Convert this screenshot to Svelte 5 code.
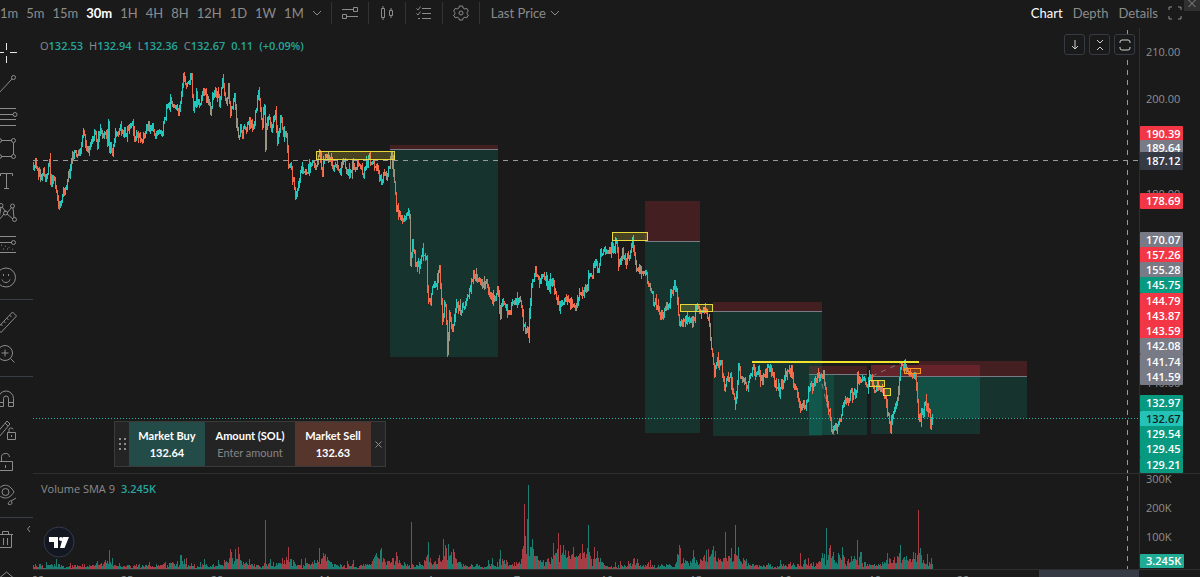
<script>
  const intervals = ['1m', '5m', '15m', '30m', '1H', '4H', '8H', '12H', '1D', '1W', '1M'];
  const views = ['Chart', 'Depth', 'Details'];

  let interval = $state('30m');
  let view = $state('Chart');
  let priceType = $state('Last Price');
  let amount = $state('');
  let panelOpen = $state(true);

  const tools = [
    ['cursor', 'line', 'levels', 'shape', 'text', 'pattern', 'forecast', 'emoji'],
    ['ruler', 'zoom'],
    ['magnet', 'draw', 'lock', 'eye'],
    ['trash'],
  ];

  // swing points of the series, canvas x / y
  const swings = [
    33,163, 34,173, 36,161, 39,172, 41,177, 44,170, 47,178, 50,163, 52,183, 54,173, 57,192, 58,201, 61,205,
    63,195, 67,183, 70,173, 73,158, 77,152, 80,153, 82,141, 85,133, 89,153, 93,142, 95,130, 98,142, 99,130,
    103,135, 105,132, 108,143, 109,119, 110,147, 113,152, 117,132, 121,129, 124,133, 127,130, 133,123,
    136,140, 138,132, 143,140, 146,128, 152,126, 157,136, 160,131, 164,127, 167,110, 171,102, 175,104,
    179,113, 182,93, 184,77, 187,83, 192,77, 194,107, 197,98, 201,105, 204,85, 207,97, 211,109, 215,93,
    218,92, 220,103, 223,83, 227,105, 229,87, 231,110, 235,97, 237,123, 239,138, 241,125, 243,132, 245,125,
    247,130, 250,120, 254,128, 256,113, 259,93, 263,123, 265,108, 266,148, 267,123, 269,115, 272,133,
    276,110, 278,143, 281,120, 285,135, 287,138, 289,167, 292,170, 297,197, 299,183, 303,165, 306,173,
    310,168, 317,162, 320,150, 323,172, 326,155, 330,158, 333,167, 337,162, 340,168, 344,163, 349,173,
    353,165, 358,164, 364,172, 370,158, 377,167, 382,180, 385,172, 387,177, 392,157, 394,170, 397,208,
    400,212, 405,220, 410,212, 411,263, 413,240, 417,267, 420,264, 423,253, 427,255, 428,290, 431,303,
    433,287, 437,282, 440,270, 443,320, 446,303, 448,352, 450,310, 453,327, 457,302, 461,313, 467,298,
    470,293, 474,273, 478,280, 483,283, 486,278, 489,293, 496,298, 498,287, 501,313, 503,300, 509,315,
    514,302, 521,300, 524,322, 529,332, 532,287, 536,272, 541,282, 544,270, 549,287, 553,280, 560,305,
    568,298, 575,308, 582,292, 583,297, 588,285, 590,272, 592,278, 595,260, 599,268, 601,252, 605,252,
    609,255, 613,248, 617,245, 619,262, 623,253, 627,262, 631,253, 633,238, 637,267, 642,272, 646,273,
    650,287, 655,302, 661,317, 667,308, 672,295, 674,287, 677,288, 680,323, 684,323, 687,318, 693,323,
    696,310, 698,305, 701,313, 706,307, 709,322, 712,345, 715,375, 718,358, 722,366, 725,385, 730,373,
    736,400, 739,367, 743,378, 748,390, 752,372, 758,370, 763,378, 771,367, 776,383, 780,392, 785,377,
    792,370, 794,385, 797,387, 801,407, 807,403, 810,388, 813,385, 818,377, 824,373, 828,400, 833,433,
    838,425, 842,412, 847,400, 851,393, 856,395, 858,377, 863,377, 868,382, 872,377, 875,395, 879,383,
    883,388, 887,403, 891,427, 895,407, 898,398, 901,370, 903,363, 910,370, 914,375, 917,385, 919,422,
    922,415, 926,405, 930,410, 931,423, 933,418,
  ];

  // x, height above the baseline, up
  const spikes = [
    [109, 19, 1], [181, 14, 1], [230, 20, 0], [238, 22, 0], [265, 49, 0], [288, 22, 0], [319, 21, 1],
    [325, 15, 0], [376, 16, 1], [381, 21, 0], [396, 17, 0], [411, 47, 0], [428, 27, 1], [443, 30, 0],
    [448, 25, 1], [453, 20, 1], [500, 19, 1], [524, 65, 0], [527, 50, 0], [528, 84, 1], [532, 30, 1],
    [553, 26, 0], [558, 36, 0], [563, 24, 0], [573, 22, 1], [582, 25, 0], [588, 44, 1], [594, 22, 0],
    [634, 11, 0], [679, 24, 0], [693, 19, 1], [708, 20, 0], [713, 23, 0], [725, 37, 0], [735, 44, 1],
    [738, 22, 1], [800, 16, 0], [826, 41, 1], [830, 24, 0], [842, 22, 1], [857, 29, 1], [887, 16, 0],
    [900, 24, 1], [915, 16, 0], [918, 59, 0],
  ];

  let seed = 11;
  function random() {
    seed = (seed * 16807) % 2147483647;
    return seed / 2147483647;
  }

  function levelAt(x) {
    for (let i = 2; i < swings.length; i += 2) {
      if (x <= swings[i]) {
        const t = (x - swings[i - 2]) / (swings[i] - swings[i - 2]);
        return swings[i - 1] + t * (swings[i + 1] - swings[i - 1]);
      }
    }
    return swings[swings.length - 1];
  }

  function buildCandles() {
    const paths = { up: '', down: '', mixed: '' };
    let prev = levelAt(33);
    for (let x = 33; x <= 932; x++) {
      const close = levelAt(x + 1) + (random() - 0.5) * 9;
      const wick = random() < 0.2 ? 7 : 3;
      const top = Math.round(Math.min(prev, close) - random() * wick);
      const bottom = Math.round(Math.max(prev, close) + random() * wick + 1);
      const side = random() < 0.16 ? 'mixed' : close < prev ? 'up' : 'down';
      paths[side] += `M${x + 0.5} ${top}V${bottom}`;
      prev = close;
    }
    return paths;
  }

  function buildVolume() {
    const bars = { up: '', down: '' };
    for (let x = 33; x <= 932; x++) {
      let h = 1 + random() * 4 + (random() < 0.15 ? random() * 7 : 0);
      let up = random() < 0.5;
      for (const [sx, sh, rising] of spikes) {
        const d = Math.abs(x - sx);
        if (d === 0) {
          h = sh;
          up = rising === 1;
          break;
        }
        if (d < 14 && sh !== 49 && sh !== 47) h += Math.min(sh, 24) * 0.6 * random() * Math.exp(-d / 6);
      }
      bars[up ? 'up' : 'down'] += `M${x + 0.5} 95V${95 - Math.round(h)}`;
    }
    return bars;
  }

  const candles = buildCandles();
  const volume = buildVolume();

  // short positions: left, right, stop, entry, target
  const positions = [
    [390, 498, 145, 149, 357],
    [645, 700, 201, 241, 433],
    [713, 822, 302, 311, 436],
    [809, 867, 366, 374, 435],
    [871, 980, 365, 376, 434],
    [918, 1027, 361, 376, 418],
  ];

  const boxes = [
    [316, 151, 78, 8],
    [612, 232, 35, 8],
    [680, 304, 32, 7],
    [869, 380, 15, 6],
    [883, 388, 7, 7],
    [904, 368, 16, 5],
  ];

  const prices = [['210.00', 52], ['200.00', 99], ['180.00', 194], ['140.00', 383]];
  const tags = [
    ['190.39', 134, 'stop'],
    ['189.64', 148, 'entry'],
    ['178.69', 201, 'stop'],
    ['170.07', 240, 'entry'],
    ['157.26', 255, 'stop'],
    ['155.28', 270, 'entry'],
    ['145.75', 285, 'target'],
    ['144.79', 301, 'stop'],
    ['143.87', 316, 'stop'],
    ['143.59', 331, 'stop'],
    ['142.08', 346, 'entry'],
    ['141.74', 362, 'entry'],
    ['141.59', 377, 'entry'],
    ['132.97', 403, 'target'],
    ['132.67', 419, 'last'],
    ['129.54', 434, 'target'],
    ['129.45', 449, 'target'],
    ['129.21', 465, 'target'],
  ];
  const dates = [
    ['22', 38], ['25', 127], ['28', 217], ['Mar', 330], ['4', 430], ['7', 517],
    ['10', 607], ['13', 696], ['16', 785], ['19', 875], ['22', 963],
  ];
</script>

{#snippet chevron()}
  <svg class="chevron" width="10" height="8" viewBox="0 0 10 8"><path d="M1 2l4 4 4-4" /></svg>
{/snippet}

<div class="terminal">
  <header class="topbar">
    <nav class="intervals">
      {#each intervals as item}
        <button class="link" class:active={interval === item} onclick={() => (interval = item)}>{item}</button>
      {/each}
      <button class="link more" aria-label="More intervals">{@render chevron()}</button>
    </nav>
    <div class="actions">
      <button aria-label="Settings sliders">
        <svg width="16" height="14" viewBox="0 0 16 14"><path d="M0 3.500h11M5 10.500h11M11.500 1.500h4v4h-4zM.5 8.500h4v4h-4z" /></svg>
      </button>
      <button aria-label="Candle style">
        <svg width="14" height="16" viewBox="0 0 14 16"><path d="M1.500 3.500h3v9h-3zM3 1v2.500M3 12.500V15M9.500 5.500h3v5h-3zM11 3v2.500M11 10.500V13" /></svg>
      </button>
      <button aria-label="Indicators">
        <svg width="16" height="14" viewBox="0 0 16 14"><path d="M6 2.500h9M6 7.500h9M6 12.500h9M.5 2.500L2 4l2.500-3.500M.5 7.500L2 9l2.500-3.500M2 12.500h2" /></svg>
      </button>
      <button aria-label="Settings">
        <svg width="16" height="16" viewBox="0 0 16 16"><path d="M6.400 1h3.200l.5 2 1.700 1 2-.6 1.600 2.800-1.500 1.400v1l1.500 1.400-1.600 2.800-2-.6-1.700 1-.5 1.800H6.400l-.5-1.800-1.700-1-2 .6L.6 10l1.500-1.400v-1L.6 6.200l1.600-2.800 2 .6 1.700-1z" /><circle cx="8" cy="8" r="2" /></svg>
      </button>
    </div>
    <label class="price-type">
      <select bind:value={priceType} aria-label="Price type">
        <option>Last Price</option>
        <option>Mark Price</option>
        <option>Index Price</option>
      </select>
      {@render chevron()}
    </label>
    <nav class="views">
      {#each views as item}
        <button class="link" class:active={view === item} onclick={() => (view = item)}>{item}</button>
      {/each}
      <button class="link" aria-label="Full screen">
        <svg width="14" height="14" viewBox="0 0 14 14"><path d="M1 4V1h3M10 1h3v3M13 10v3h-3M4 13H1v-3" /></svg>
      </button>
    </nav>
    <button class="corner" aria-label="Close window">
      <svg width="8" height="8" viewBox="0 0 8 8"><path d="M.5 0L7.500 7M7.500 0L.5 7" /></svg>
    </button>
  </header>

  <div class="workspace">
    <aside class="tools">
      {#each tools as group}
        <div class="group">
          {#each group as tool}
            <button aria-label={tool}>
              <svg width="28" height="28" viewBox="0 0 28 28">
                {#if tool === 'cursor'}
                  <path class="bright" d="M12.500 4v7M12.500 17v7M3 13.500h7M16 13.500h7" />
                {:else if tool === 'line'}
                  <path d="M4 23L18 8" /><circle cx="19.500" cy="6.500" r="2" />
                {:else if tool === 'levels'}
                  <path d="M4 5.500h18M4 11.500h15M4 16.500h18M4 22.500h18" /><circle cx="21" cy="11.500" r="2" />
                {:else if tool === 'shape'}
                  <path d="M7 5.500h11M7 21.500h11M5.500 7v13M19.500 8v11" />
                  <circle cx="19.500" cy="5.500" r="2" /><circle cx="19.500" cy="21.500" r="2" />
                  <circle cx="5.500" cy="5.500" r="2" /><circle cx="5.500" cy="21.500" r="2" />
                {:else if tool === 'text'}
                  <path d="M6.500 9V6.500h12V9M12.500 6.500v15M10 21.500h5" />
                {:else if tool === 'pattern'}
                  <path d="M7 8l-2 12M8 8l4 5M13 14l5-6M19 9l1 10M13 15l6 5M10 15l-5 6" />
                  <circle cx="7" cy="6.500" r="2" /><circle cx="18.500" cy="7" r="2" />
                  <circle cx="11.500" cy="14" r="2" /><circle cx="20.500" cy="20.500" r="2" />
                {:else if tool === 'forecast'}
                  <path d="M4 5.500h18M4 11.500h14M4 21.500h18" /><circle cx="19.500" cy="11.500" r="2" />
                  <path stroke-dasharray="1 3" d="M7 14l7 2 6 3M5 18h12" />
                {:else if tool === 'emoji'}
                  <circle cx="12" cy="14.500" r="9.500" /><path d="M8 16.500c1 4 7 4 8 0M9.500 11v2M14.500 11v2" />
                {:else if tool === 'ruler'}
                  <path d="M3 20.500L18.500 4l4 4L7 24.500zM15.500 7l2 2M12.500 10l2 2M9.500 13l2 2M6.500 16l2 2" />
                {:else if tool === 'zoom'}
                  <circle cx="11" cy="13" r="7.500" /><path d="M16.500 18.500l4 4M11 9.500v7M7.500 13h7" />
                {:else if tool === 'magnet'}
                  <path d="M4.500 21.500v-8a7.500 7.500 0 0 1 15 0v8h-5v-8a2.500 2.500 0 0 0-5 0v8zM4.500 17.500h5M14.500 17.500h5" />
                {:else if tool === 'draw'}
                  <path d="M2 17L13 4l3 3L5 20zM11 6l3 3M13.500 15.500h8v7h-8zM15 15.500v-2a2 2 0 0 1 4-1M17.500 18v2" />
                {:else if tool === 'lock'}
                  <path d="M3.500 12.500h15v9h-15zM7.500 12.500V9a4 4 0 0 1 8-1M11.500 16v3" />
                {:else if tool === 'eye'}
                  <path d="M2 11c6-9 13-9 18 0-5 8-12 8-18 0zM14 23c2-5 4-3 4-1s-3 2-4 1M17 20l5-3" /><circle cx="11.500" cy="11" r="3.500" />
                {:else if tool === 'trash'}
                  <path d="M3 8.500h16M5.500 8.500v13h12v-13M8.500 8V5.500h6V8M9.500 12v7M13.500 12v7" />
                {/if}
              </svg>
            </button>
          {/each}
        </div>
      {/each}
      <button class="tree" aria-label="Object tree">
        <svg width="28" height="28" viewBox="0 0 28 28"><path d="M3 19l9.500-8 9.500 8" /></svg>
      </button>
    </aside>

    <main class="chart">
      <section class="pane price">
        <div class="plot">
          <svg class="canvas" width="100%" height="445">
            <g transform="translate(-33 -28)">
              {#each positions as [left, right, stop, entry, target]}
                <rect class="risk" x={left} y={stop} width={right - left} height={entry - stop} />
                <rect class="reward" x={left} y={entry} width={right - left} height={target - entry} />
                <path class="entry" d="M{left} {entry + 0.5}H{right}" />
              {/each}
              <rect class="reward" x="809" y="374" width="25" height="61" />
              <rect class="reward extra" x="918" y="377" width="62" height="41" />
              <rect class="risk" x="871" y="365" width="47" height="11" />
              <path class="trace" d="M822 384L834 435M872 376L901 363" />
              <path class="up" d={candles.up} />
              <path class="down" d={candles.down} />
              <path class="mixed" d={candles.mixed} />
              {#each boxes as [x, y, width, height], i}
                <rect class="box" class:orange={i === 5} x={x + 0.5} y={y + 0.5} {width} {height} />
              {/each}
              <path class="level" d="M752 362H919" />
              <path class="cross" d="M33 160.500H1139M1127.500 30V473" />
              <path class="last" d="M33 418.500H1139" />
            </g>
          </svg>

          <p class="legend">
            <span>O<b>132.53</b></span><span>H<b>132.94</b></span><span>L<b>132.36</b></span><span>C<b>132.67</b></span><b>0.11</b><b>(+0.09%)</b>
          </p>

          <div class="pane-buttons">
            <button aria-label="Move pane down"><svg width="14" height="14" viewBox="0 0 14 14"><path d="M7 2v9M4 8l3 3 3-3" /></svg></button>
            <button aria-label="Collapse pane"><svg width="14" height="14" viewBox="0 0 14 14"><path d="M4 2l3 3 3-3M4 12l3-3 3 3" /></svg></button>
            <button aria-label="Maximize pane"><svg width="14" height="14" viewBox="0 0 14 14"><path d="M2 5V4q0-2 2-2h6q2 0 2 2v1M2 9v1q0 2 2 2h6q2 0 2-2V9" /></svg></button>
          </div>

          {#if panelOpen}
            <form class="order" onsubmit={(e) => e.preventDefault()}>
              <span class="grip">
                <svg width="7" height="12" viewBox="0 0 7 12"><path d="M0 1h2M5 1h2M0 6h2M5 6h2M0 11h2M5 11h2" /></svg>
              </span>
              <button class="side buy"><span>Market Buy</span><span>132.64</span></button>
              <div class="amount">
                <label for="amount">Amount (SOL)</label>
                <input id="amount" placeholder="Enter amount" bind:value={amount} />
              </div>
              <button class="side sell"><span>Market Sell</span><span>132.63</span></button>
              <button class="dismiss" type="button" aria-label="Close order panel" onclick={() => (panelOpen = false)}>
                <svg width="7" height="7" viewBox="0 0 7 7"><path d="M.5.5l6 6M6.500.5l-6 6" /></svg>
              </button>
            </form>
          {/if}
        </div>

        <svg class="scale" width="61" height="445">
          <g transform="translate(0 -28)">
            {#each prices as [text, y]}
              <text class="tick" x="6" y={y + 4}>{text}</text>
            {/each}
            {#each tags as [text, y, kind]}
              <rect class="tag {kind}" x="0" y={y - 8} width="43" height="16" rx="1" />
              <text class="tag-text" class:dark={kind === 'last'} x="6" y={y + 4}>{text}</text>
            {/each}
            <rect class="tag cursor" x="0" y="152" width="43" height="18" rx="1" />
            <text class="tag-text" x="6" y="165">187.12</text>
          </g>
        </svg>
      </section>

      <section class="pane volume">
        <div class="plot">
          <svg class="canvas" width="100%" height="95">
            <g transform="translate(-33 0)">
              <path class="vol-up" d={volume.up} />
              <path class="vol-down" d={volume.down} />
              <path class="cross" d="M1127.500 2V95" />
            </g>
          </svg>
          <p class="legend">Volume SMA 9 <b>3.245K</b></p>
          <a class="logo" href="#chart" aria-label="Chart provider">
            <svg width="32" height="32" viewBox="0 0 32 32">
              <circle cx="16" cy="16" r="15" />
              <path d="M6 11h9v11h-4v-6H6zM20 11h6l-4.500 11H17z" />
              <circle class="dot" cx="18" cy="13" r="2" />
            </svg>
          </a>
          <button class="fold" aria-label="Hide toolbar">
            <svg width="5" height="8" viewBox="0 0 5 8"><path d="M4 1L1.500 4 4 7" /></svg>
          </button>
        </div>
        <svg class="scale" width="61" height="95">
          <text class="tick" x="6" y="9">300K</text>
          <text class="tick" x="6" y="38">200K</text>
          <text class="tick" x="6" y="67">100K</text>
          <rect class="tag vol" x="0" y="80" width="44" height="14" rx="1" />
          <text class="tag-text" x="6" y="91">3.245K</text>
        </svg>
      </section>

      <svg class="time" width="100%" height="24">
        <g transform="translate(-33 0)">
          {#each dates as [text, x]}
            <text class="tick" {x} y="14" text-anchor="middle">{text}</text>
          {/each}
          <rect class="tag cursor" x="1039" y="0" width="100" height="20" />
        </g>
      </svg>
    </main>
  </div>
</div>

<style>
  :global(body) {
    background: #1a1a1a;
  }
  .terminal {
    display: flex;
    flex-direction: column;
    height: 100vh;
    overflow: hidden;
    position: relative;
    background: #1a1a1a;
    color: #8c8c8c;
    font-family: Lato, 'Liberation Sans', sans-serif;
    font-size: 13px;
  }
  button {
    display: flex;
    align-items: center;
    justify-content: center;
    padding: 0;
    border: 0;
    background: none;
    color: inherit;
    font: inherit;
    cursor: pointer;
  }
  svg {
    display: block;
    flex: none;
    fill: none;
    stroke: currentColor;
  }
  p {
    margin: 0;
  }
  .topbar {
    display: flex;
    align-items: center;
    height: 28px;
    flex: none;
    padding-right: 18px;
    line-height: 16px;
    padding-bottom: 2px;
    box-sizing: border-box;
  }
  .intervals {
    display: flex;
    gap: 8px;
    padding-right: 9px;
  }
  .link.active {
    color: #fff;
  }
  .intervals .active {
    font-weight: 700;
  }
  .actions {
    display: flex;
  }
  .actions button {
    width: 37px;
    height: 22px;
    box-sizing: border-box;
    border-left: 1px solid #333;
  }
  .price-type {
    display: flex;
    align-items: center;
    height: 22px;
    padding-left: 11px;
    border-left: 1px solid #333;
  }
  select {
    width: 59px;
    padding: 0;
    border: 0;
    background: none;
    color: inherit;
    font: inherit;
    appearance: none;
  }
  .views {
    display: flex;
    align-items: center;
    gap: 10px;
    margin-left: auto;
  }
  .corner {
    position: absolute;
    top: 0;
    right: 0;
    width: 16px;
    height: 11px;
    padding-bottom: 4px;
    background: #303030;
  }
  .workspace {
    display: flex;
    flex: 1;
    min-height: 0;
  }
  .tools {
    display: flex;
    flex-direction: column;
    align-items: center;
    width: 50px;
    flex: none;
    margin-left: -17px;
    padding-top: 9px;
    box-sizing: border-box;
  }
  .group {
    width: 100%;
  }
  .group + .group {
    margin-top: 6px;
    padding-top: 6px;
    border-top: 1px solid #3a3e49;
  }
  .group button {
    width: 100%;
    height: 32px;
  }
  .tree {
    height: 32px;
    padding-top: 6px;
  }
  .bright {
    stroke: #e8e8e8;
  }
  .chart {
    flex: 1;
    min-width: 0;
  }
  .pane {
    display: flex;
  }
  .volume {
    border-top: 1px solid #2e2e2e;
  }
  .plot {
    flex: 1;
    min-width: 0;
    position: relative;
  }
  .scale {
    border-left: 1px solid #2e2e2e;
    box-sizing: border-box;
  }
  .time {
    border-top: 1px solid #2e2e2e;
    overflow: hidden;
  }
  .canvas {
    overflow: hidden;
  }
  .risk {
    fill: #f23645;
    fill-opacity: 0.2;
    stroke: none;
  }
  .reward {
    fill: #089981;
    fill-opacity: 0.2;
    stroke: none;
  }
  .reward.extra {
    fill-opacity: 0.1;
  }
  .entry {
    stroke: #787b86;
  }
  .trace {
    stroke: #787b86;
    stroke-dasharray: 5 5;
  }
  .up {
    stroke: #22c9bd;
  }
  .down {
    stroke: #f0694a;
  }
  .mixed {
    stroke: #9a9583;
  }
  .box {
    fill: #ffeb3b;
    fill-opacity: 0.2;
    stroke: #e6d83a;
  }
  .box.orange {
    fill: #ff9800;
    stroke: #f39a1e;
  }
  .level {
    stroke: #f2e32c;
    stroke-width: 2;
  }
  .cross {
    stroke: #9a9a9a;
    stroke-dasharray: 5 5;
  }
  .last {
    stroke: #22b5a8;
    stroke-dasharray: 1 2;
  }
  .vol-up {
    stroke: #1c7e70;
  }
  .vol-down {
    stroke: #a73d44;
  }
  .tick,
  .tag-text {
    fill: #8f8f8f;
    stroke: none;
    font: 11px 'Open Sans', sans-serif;
  }
  .tag-text {
    fill: #fff;
    font-weight: 600;
  }
  .tag-text.dark {
    fill: #102523;
  }
  .tag {
    stroke: none;
  }
  .tag.stop {
    fill: #f23645;
  }
  .tag.entry {
    fill: #787b86;
  }
  .tag.target {
    fill: #089981;
  }
  .tag.last {
    fill: #25c2b7;
  }
  .tag.vol {
    fill: #22ab94;
  }
  .tag.cursor {
    fill: #363a45;
  }
  .legend {
    display: flex;
    gap: 6px;
    position: absolute;
    top: 10px;
    left: 7px;
    font-family: 'Open Sans', sans-serif;
    font-size: 11px;
    line-height: 16px;
  }
  .legend b {
    color: #26a69a;
    font-weight: 600;
  }
  .volume .legend {
    top: 7px;
    left: 8px;
  }
  .pane-buttons {
    display: flex;
    gap: 4px;
    position: absolute;
    top: 6px;
    right: 4px;
  }
  .pane-buttons button {
    width: 21px;
    height: 21px;
    border: 1px solid #363a45;
    border-radius: 3px;
    background: #1a1a1a;
    color: #d0d0d0;
  }
  .order {
    display: flex;
    position: absolute;
    top: 393px;
    left: 81px;
    height: 46px;
    box-sizing: border-box;
    border: 1px solid #3a3a3a;
    background: #242424;
    color: #fff;
    font-size: 11px;
    line-height: 17px;
  }
  .grip,
  .dismiss {
    display: flex;
    align-items: center;
    justify-content: center;
    width: 14px;
    color: #8c8c8c;
  }
  .grip svg {
    stroke-width: 2;
  }
  .side {
    flex-direction: column;
    width: 76px;
    font-weight: 700;
  }
  .buy {
    background: #234b47;
  }
  .sell {
    background: #56352c;
  }
  .amount {
    display: flex;
    flex-direction: column;
    justify-content: center;
    width: 90px;
    text-align: center;
    font-weight: 700;
  }
  input {
    width: 100%;
    height: 17px;
    padding: 0;
    border: 0;
    outline: 0;
    background: none;
    color: #fff;
    font: 11px Lato, sans-serif;
    text-align: center;
  }
  input::placeholder {
    color: #858585;
  }
  .logo {
    position: absolute;
    left: 10px;
    bottom: 11px;
  }
  .logo circle {
    fill: #131722;
    stroke: #363a4a;
  }
  .logo path,
  .logo .dot {
    fill: #fff;
    stroke: none;
  }
  .fold {
    position: absolute;
    top: 51px;
    left: -7px;
  }
</style>
